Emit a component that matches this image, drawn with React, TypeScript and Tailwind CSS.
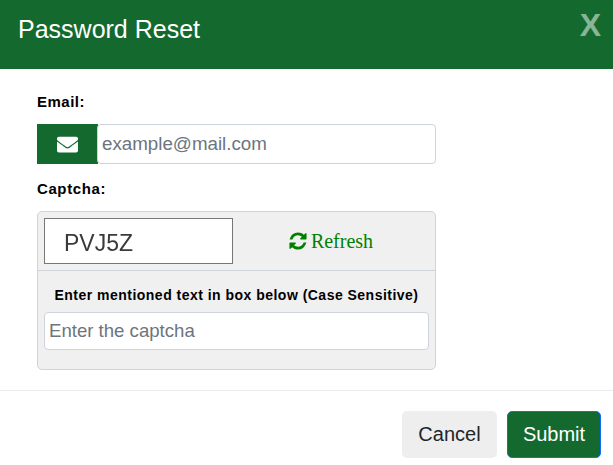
import React from 'react';
import { FaEnvelope } from 'react-icons/fa';

const App: React.FC = () => {
    return (
        <div className="w-[613px] h-[465px] bg-white overflow-hidden font-['Liberation_Sans',sans-serif]">
            <div className="flex justify-between h-[69px] bg-[#146a2e] pl-[18px] pr-[12px]">
                <div className="text-white text-[25px] leading-[28px] pt-[15px]">Password Reset</div>
                <div className="text-white/50 text-[32px] leading-[32px] font-bold pt-[9px]">X</div>
            </div>
            <div className="h-[322px] border-b border-[#e9ecef] pl-[37px] pt-[25px] w-full">
                <div className="w-[399px]">
                    <div className="text-[15px] tracking-[0.5px] leading-[16px] font-bold text-black">Email:</div>
                    <div className="flex h-[40px] mt-[14px]">
                        <div className="flex items-center justify-center w-[61px] bg-[#146a2e] text-white text-[21px]">
                            <FaEnvelope />
                        </div>
                        <div className="flex-1 flex items-center bg-white border border-[#ced4da] rounded-[4px] -ml-px pl-[4px] text-[18.75px] text-[#6c757d]">
                            example@mail.com
                        </div>
                    </div>
                    <div className="text-[15px] tracking-[0.6px] leading-[16px] font-bold text-black mt-[17px]">Captcha:</div>
                    <div className="mt-[14px] h-[159px] bg-[#f0f0f0] border border-[#ced4da] rounded-[5px]">
                        <div className="flex h-[59px] border-b border-[#ced4da] pl-[6px] pt-[6px]">
                            <div className="flex items-center w-[189px] h-[46px] bg-white border border-[#777777] pl-[19px] pt-[5px] text-[23px] text-[#3a3a3a] blur-[0.4px]">
                                PVJ5Z
                            </div>
                            <div className="flex-1 flex items-center justify-center gap-[3px] h-[46px] pr-[7px] text-[#008000] text-[20px] font-['Liberation_Serif',serif]">
                                <svg width="20" height="20" viewBox="0 0 1792 1792" fill="currentColor">
                                    <path d="M1639 1056q0 5-1 7-64 268-268 434.5t-478 166.5q-146 0-282.5-55t-243.5-157l-129 129q-19 19-45 19t-45-19-19-45v-448q0-26 19-45t45-19h448q26 0 45 19t19 45-19 45l-137 137q71 66 161 102t187 36q134 0 250-65t186-179q11-17 53-117 8-23 30-23h192q13 0 22.5 9.5t9.5 22.5zm25-800v448q0 26-19 45t-45 19h-448q-26 0-45-19t-19-45 19-45l138-138q-148-137-349-137-134 0-250 65t-186 179q-11 17-53 117-8 23-30 23h-199q-13 0-22.5-9.5t-9.5-22.5v-7q65-268 270-434.5t480-166.5q146 0 284 55.5t245 156.5l130-129q19-19 45-19t45 19 19 45z" />
                                </svg>
                                <span>Refresh</span>
                            </div>
                        </div>
                        <div className="text-center text-[14px] tracking-[0.48px] leading-[16px] font-bold text-black mt-[16px]">
                            Enter mentioned text in box below (Case Sensitive)
                        </div>
                        <div className="flex items-center h-[38px] mx-[6px] mt-[9px] bg-white border border-[#ced4da] rounded-[4px] pl-[4px] text-[18.6px] text-[#6c757d]">
                            Enter the captcha
                        </div>
                    </div>
                </div>
            </div>
            <div className="flex justify-end gap-[10px] pt-[20px] pr-[12px]">
                <button className="w-[95px] h-[47px] pb-[2px] bg-[#eeeeee] rounded-[5px] text-[20px] text-[#212529]">Cancel</button>
                <button className="w-[94px] h-[47px] pb-[2px] bg-[#146a2e] border border-[#0d6efd] rounded-[5px] text-[20px] text-white">Submit</button>
            </div>
        </div>
    );
};

export default App;
